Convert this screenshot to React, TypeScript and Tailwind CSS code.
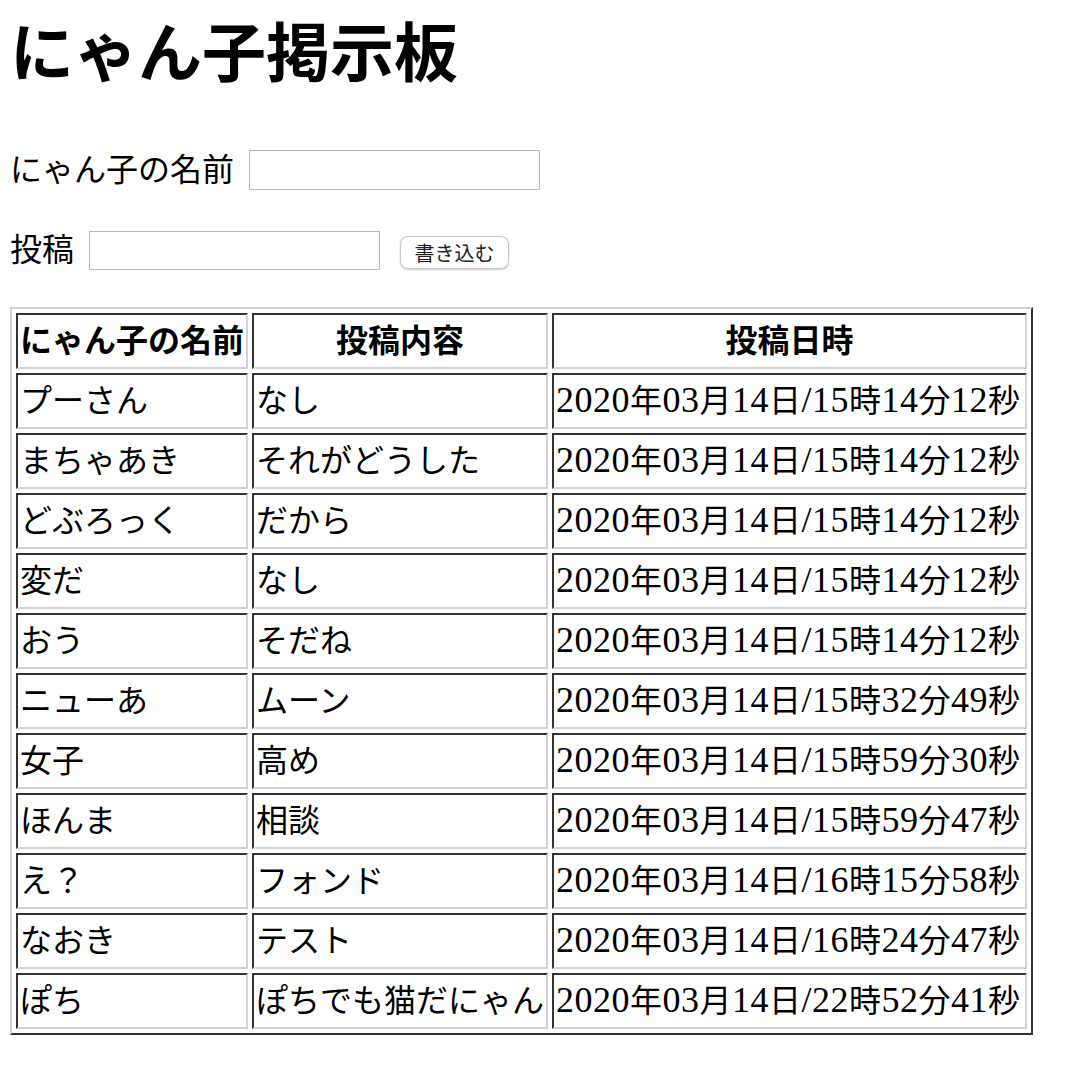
import React from "react";

type Post = { name: string; body: string; time: string };

const posts: Post[] = [
  { name: "プーさん", body: "なし", time: "2020年03月14日/15時14分12秒" },
  { name: "まちゃあき", body: "それがどうした", time: "2020年03月14日/15時14分12秒" },
  { name: "どぶろっく", body: "だから", time: "2020年03月14日/15時14分12秒" },
  { name: "変だ", body: "なし", time: "2020年03月14日/15時14分12秒" },
  { name: "おう", body: "そだね", time: "2020年03月14日/15時14分12秒" },
  { name: "ニューあ", body: "ムーン", time: "2020年03月14日/15時32分49秒" },
  { name: "女子", body: "高め", time: "2020年03月14日/15時59分30秒" },
  { name: "ほんま", body: "相談", time: "2020年03月14日/15時59分47秒" },
  { name: "え？", body: "フォンド", time: "2020年03月14日/16時15分58秒" },
  { name: "なおき", body: "テスト", time: "2020年03月14日/16時24分47秒" },
  { name: "ぽち", body: "ぽちでも猫だにゃん", time: "2020年03月14日/22時52分41秒" },
];

const cell =
  "border-2 border-t-[#333333] border-l-[#333333] border-b-[#d3d3d3] border-r-[#d3d3d3] p-[2px] text-[32px] leading-[48px] whitespace-nowrap";

// digits in the original's mincho font run larger than the kanji, so bump them up
function Stamp({ text }: { text: string }) {
  const parts = text.split(/([0-9/]+)/).filter(Boolean);
  return (
    <>
      {parts.map((part, i) =>
        /^[0-9/]+$/.test(part) ? (
          <span key={i} className="text-[36px] leading-none">
            {part}
          </span>
        ) : (
          <span key={i}>{part}</span>
        )
      )}
    </>
  );
}

export default function App() {
  return (
    <div className="min-h-screen bg-white pl-[10px] pt-[23px] font-['Liberation_Serif','Noto_Sans_CJK_JP',serif] text-black">
      <h1 className="text-[64px] font-bold leading-[64px]">にゃん子掲示板</h1>

      <div className="mt-[63px] flex h-[40px] items-center">
        <label className="text-[32px] leading-[40px]">にゃん子の名前</label>
        <input
          type="text"
          className="ml-[15px] h-[40px] w-[291px] border border-[#b8b8b8] bg-white"
        />
      </div>

      <div className="mt-[41px] flex h-[39px] items-center">
        <label className="text-[32px] leading-[39px]">投稿</label>
        <input
          type="text"
          className="ml-[15px] h-[39px] w-[291px] border border-[#b8b8b8] bg-white"
        />
        <button
          type="button"
          className="ml-[20px] mt-[3px] h-[33px] w-[109px] rounded-[8px] border border-[#c6c6c6] bg-white font-['Noto_Sans_CJK_JP',sans-serif] text-[20px] leading-[31px] text-[#222] shadow-[0_1px_2px_rgba(0,0,0,0.2)]"
        >
          書き込む
        </button>
      </div>

      <table className="mt-[37px] w-[1023px] table-fixed border-separate border-spacing-[4px] border-2 border-t-[#d3d3d3] border-l-[#d3d3d3] border-r-[#333333] border-b-[#333333]">
        <thead>
          <tr>
            <th className={`${cell} w-[232px] text-center font-bold`}>にゃん子の名前</th>
            <th className={`${cell} w-[296px] text-center font-bold`}>投稿内容</th>
            <th className={`${cell} w-[475px] text-center font-bold`}>投稿日時</th>
          </tr>
        </thead>
        <tbody>
          {posts.map((p, i) => (
            <tr key={i}>
              <td className={`${cell} text-left`}>{p.name}</td>
              <td className={`${cell} text-left`}>{p.body}</td>
              <td className={`${cell} text-left tracking-[0.5px]`}>
                <Stamp text={p.time} />
              </td>
            </tr>
          ))}
        </tbody>
      </table>
    </div>
  );
}
